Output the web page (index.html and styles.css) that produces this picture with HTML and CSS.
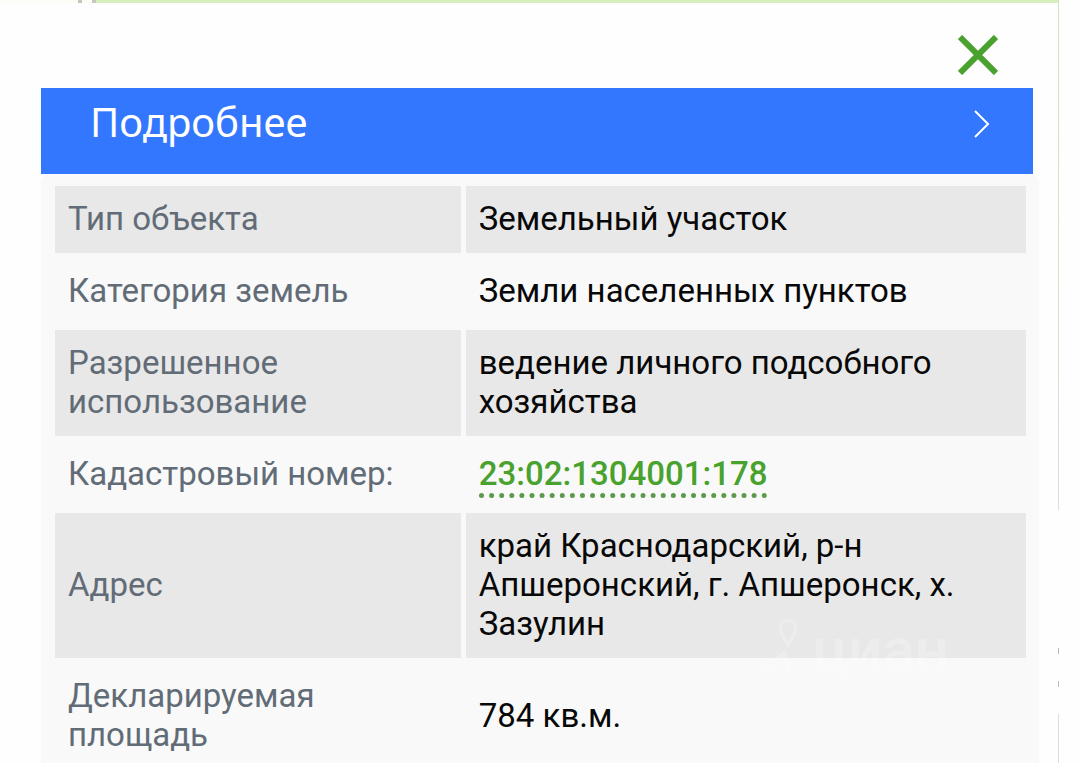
FILE: index.html
```
<!DOCTYPE html>
<html lang="ru">
<head>
    <meta charset="UTF-8">
    <meta name="viewport" content="width=device-width, initial-scale=1.0">
    <title>Земельный участок</title>
    <link rel="stylesheet" href="styles.css">
</head>
<body>
    <div class="page">
        <main class="popup">
            <div class="map-strip"><span class="mark"></span><span class="mark"></span></div>
            <div class="toolbar">
                <button type="button" class="close" aria-label="Закрыть">
                    <svg width="40" height="40" viewBox="0 0 40 40"><path d="M2 2L38 38M38 2L2 38" stroke="#48a22d" stroke-width="6" fill="none"/></svg>
                </button>
            </div>
            <a class="more" href="#details">
                <span>Подробнее</span>
                <svg width="16" height="28" viewBox="0 0 16 28"><path d="M1 1L14 14L1 27" stroke="#fff" stroke-width="2" fill="none"/></svg>
            </a>
            <section class="details" id="details">
                <table class="info">
                    <tr>
                        <th scope="row">Тип объекта</th>
                        <td>Земельный участок</td>
                    </tr>
                    <tr>
                        <th scope="row">Категория земель</th>
                        <td>Земли населенных пунктов</td>
                    </tr>
                    <tr>
                        <th scope="row">Разрешенное использование</th>
                        <td>ведение личного подсобного хозяйства</td>
                    </tr>
                    <tr>
                        <th scope="row">Кадастровый номер:</th>
                        <td><a class="number" href="#number">23:02:1304001:178</a></td>
                    </tr>
                    <tr>
                        <th scope="row">Адрес</th>
                        <td>край Краснодарский, р-н Апшеронский, г. Апшеронск, х. Зазулин</td>
                    </tr>
                    <tr>
                        <th scope="row">Декларируемая площадь</th>
                        <td>784 кв.м.</td>
                    </tr>
                </table>
                <!-- Watermark -->
                <div class="watermark">
                    <svg width="48" height="66" viewBox="0 0 48 66" fill="none" stroke="#fff">
                        <path d="M36 28C32 20 28 16 28 11a8 8 0 0 1 16 0C44 16 40 20 36 28Z" stroke-width="3"/>
                        <path d="M2 58L32 36L38 62M16 48L28 64" stroke-width="4"/>
                    </svg>
                    <span>циан</span>
                </div>
            </section>
        </main>
        <!-- Edge of the map -->
        <aside class="map-edge">
            <div class="edge-line"></div>
            <div class="dot"></div>
            <div class="dot"></div>
            <div class="edge-tail"></div>
        </aside>
    </div>
</body>
</html>
```
FILE: styles.css
```
body {
    font-family: Roboto, sans-serif;
    margin: 0;
    background-color: #fefefe;
    overflow: hidden;
}

.page {
    display: flex;
    min-height: 100vh;
}

.popup {
    flex: 1;
}

.map-strip {
    display: flex;
    gap: 10px;
    height: 3px;
    padding-left: 78px;
    background: linear-gradient(to right, #fcfdf5 95px, #d5efbd 95px);
}

.mark {
    width: 4px;
    background-color: #c4c9be;
}

.toolbar {
    display: flex;
    justify-content: flex-end;
    padding: 32px 60px 13px 0;
}

.close {
    border: none;
    background: none;
    padding: 0;
    cursor: pointer;
}

.close svg {
    display: block;
}

.more {
    display: flex;
    justify-content: space-between;
    align-items: flex-start;
    margin: 0 25px 0 41px;
    padding: 6px 43px 24px 49px;
    background-color: #3377ff;
    color: white;
    font-family: "Noto Sans", sans-serif;
    font-size: 40px;
    line-height: 56px;
    text-decoration: none;
}

.more svg {
    margin-top: 16px;
}

.details {
    position: relative;
    margin: 0 19px 0 41px;
    padding: 7px 8px 0 9px;
    border-radius: 10px;
    background-color: #f9f9f9;
}

.info {
    width: 100%;
    table-layout: fixed;
    border-spacing: 5px;
    font-size: 33px;
    line-height: 39px;
}

.info th,
.info td {
    padding: 13px 13px 15px;
    text-align: left;
    font-weight: 400;
}

.info th {
    box-sizing: border-box;
    width: 42%;
    color: #626c77;
}

.info td {
    color: #080808;
}

.info tr:nth-child(odd) th,
.info tr:nth-child(odd) td {
    background-color: #e8e8e8;
}

.number {
    color: #48a22d;
    font-weight: 500;
    text-decoration: none;
    border-bottom: 5px dotted #5a9a4a;
}

.watermark {
    position: absolute;
    right: 90px;
    bottom: 91px;
    display: flex;
    align-items: center;
    gap: 12px;
    color: white;
    font-size: 60px;
    font-weight: 500;
    line-height: 60px;
    opacity: 0.25;
}

.map-edge {
    display: flex;
    flex-direction: column;
    width: 22px;
}

.edge-line {
    width: 1px;
    height: 510px;
    margin-bottom: 138px;
    background: linear-gradient(#cfe3bd, #dcdfd4);
}

.dot {
    width: 1px;
    height: 6px;
    margin-bottom: 27px;
    background-color: #bbb;
}

.edge-tail {
    flex: 1;
    width: 1px;
    background-color: #ddd;
}
```
